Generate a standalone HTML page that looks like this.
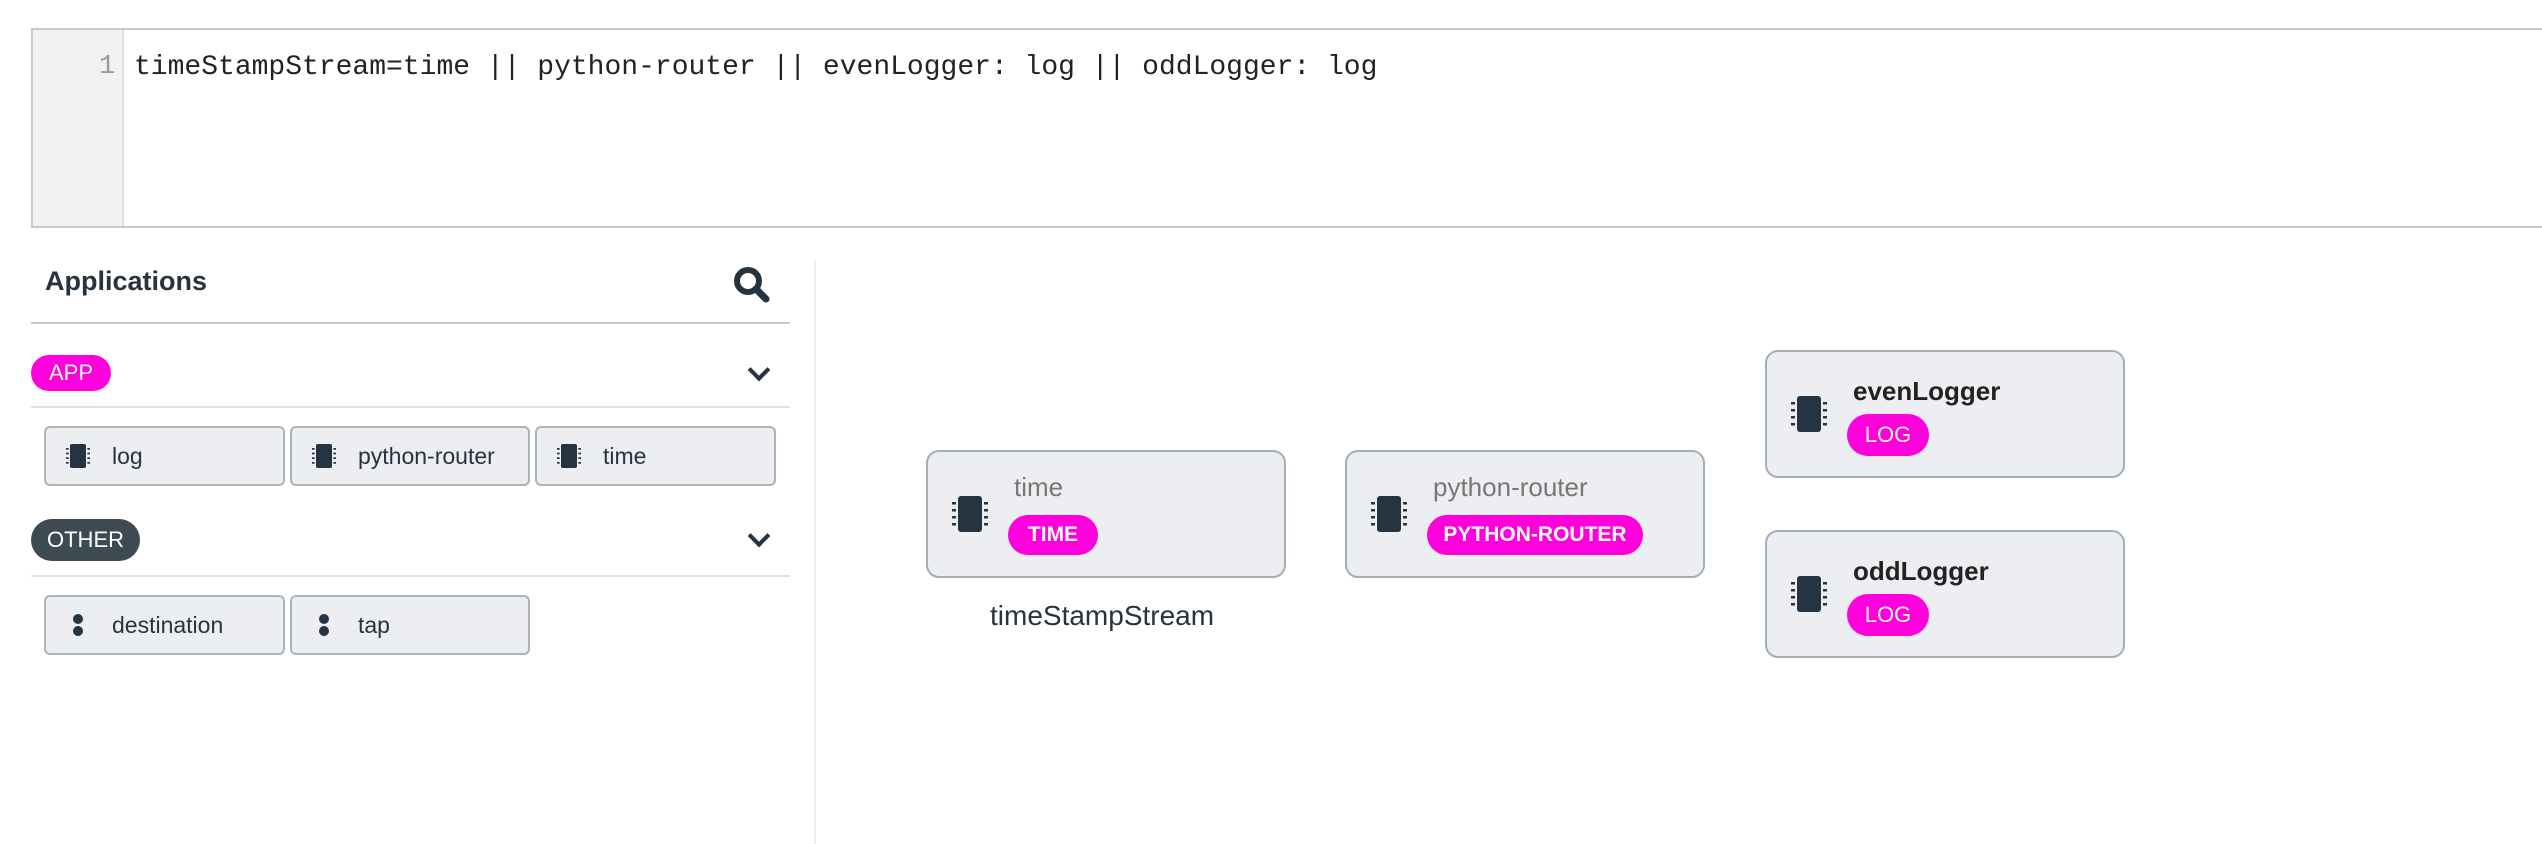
<!DOCTYPE html>
<html><head><meta charset="utf-8"><style>
*{box-sizing:border-box;margin:0;padding:0}
body{width:2542px;height:844px;background:#fff;position:relative;overflow:hidden;font-family:"Liberation Sans",sans-serif;color:#263340}
.abs{position:absolute}
.editor{left:31px;top:28px;width:2530px;height:200px;border:2px solid #c5cacf;border-right:none}
.gutter{left:0;top:0;width:91px;height:100%;background:#f0f1f3;border-right:2px solid #dde0e3}
.code{left:101px;top:22px;font-family:"Liberation Mono",monospace;font-size:28px;color:#222;white-space:pre}
.ln{left:66px;top:22px;font-family:"Liberation Mono",monospace;font-size:27px;color:#999}
.pill{position:absolute;border-radius:22px;color:#fff;font-size:22px;display:flex;align-items:center;justify-content:center}
.mag{background:#ff00dc}
.item{position:absolute;height:60px;background:#eceef1;border:2px solid #a9b4bc;border-radius:6px;font-size:23px;display:flex;align-items:center}
.item svg{margin-left:20px;margin-right:22px}
.node{position:absolute;width:360px;height:128px;background:#eceef1;border:2px solid #a3afb8;border-radius:13px}
.node svg{position:absolute;left:24px;top:44px}
.ttl{position:absolute;left:86px;top:20px;font-size:26px}
.hr{position:absolute;left:31px;width:759px;height:2px;background:#dfe2e5}
.chev{position:absolute;width:16px;height:16px;border-right:4px solid #263340;border-bottom:4px solid #263340;transform:rotate(45deg)}
</style></head><body>
<div class="abs editor"><div class="abs gutter"></div><div class="abs ln">1</div><div class="abs code">timeStampStream=time || python-router || evenLogger: log || oddLogger: log</div></div>

<div class="abs" style="left:45px;top:266px;font-size:27px;font-weight:bold">Applications</div>
<svg class="abs" style="left:733px;top:266px" width="38" height="38" viewBox="0 0 38 38"><circle cx="15" cy="15" r="11" fill="none" stroke="#263340" stroke-width="6"/><line x1="23" y1="23" x2="33" y2="33" stroke="#263340" stroke-width="7" stroke-linecap="round"/></svg>
<div class="hr" style="top:322px;background:#c5cacf"></div>
<div class="abs" style="left:814px;top:260px;width:2px;height:584px;background:#eceef0"></div>

<div class="pill mag" style="left:31px;top:355px;width:80px;height:36px">APP</div>
<div class="chev" style="left:751px;top:362px"></div>
<div class="hr" style="top:406px"></div>

<svg width="0" height="0" style="position:absolute"><defs><g id="chip"><rect x="6" y="0" width="24" height="36" rx="3" fill="#263340"/><g fill="#263340"><rect x="0" y="6" width="4" height="2.5"/><rect x="0" y="13" width="4" height="2.5"/><rect x="0" y="20" width="4" height="2.5"/><rect x="0" y="27" width="4" height="2.5"/><rect x="32" y="6" width="4" height="2.5"/><rect x="32" y="13" width="4" height="2.5"/><rect x="32" y="20" width="4" height="2.5"/><rect x="32" y="27" width="4" height="2.5"/></g></g></defs></svg>

<div class="item" style="left:44px;top:426px;width:241px"><svg width="24" height="26" viewBox="0 0 36 36"><use href="#chip"/></svg>log</div>
<div class="item" style="left:290px;top:426px;width:240px"><svg width="24" height="26" viewBox="0 0 36 36"><use href="#chip"/></svg>python-router</div>
<div class="item" style="left:535px;top:426px;width:241px"><svg width="24" height="26" viewBox="0 0 36 36"><use href="#chip"/></svg>time</div>

<div class="pill" style="left:31px;top:519px;width:109px;height:42px;background:#3d4a52">OTHER</div>
<div class="chev" style="left:751px;top:528px"></div>
<div class="hr" style="top:575px"></div>

<div class="item" style="left:44px;top:595px;width:241px"><svg width="24" height="26" viewBox="0 0 24 26"><circle cx="12" cy="7" r="5" fill="#263340"/><circle cx="12" cy="19" r="5" fill="#263340"/></svg>destination</div>
<div class="item" style="left:290px;top:595px;width:240px"><svg width="24" height="26" viewBox="0 0 24 26"><circle cx="12" cy="7" r="5" fill="#263340"/><circle cx="12" cy="19" r="5" fill="#263340"/></svg>tap</div>

<div class="node" style="left:926px;top:450px"><svg width="36" height="36"><use href="#chip"/></svg><div class="ttl" style="color:#777">time</div><div class="pill mag" style="left:80px;top:63px;width:90px;height:40px;font-weight:bold;font-size:21px">TIME</div></div>
<div class="abs" style="left:990px;top:600px;font-size:28px">timeStampStream</div>

<div class="node" style="left:1345px;top:450px"><svg width="36" height="36"><use href="#chip"/></svg><div class="ttl" style="color:#777">python-router</div><div class="pill mag" style="left:80px;top:63px;width:216px;height:40px;font-weight:bold;font-size:21px">PYTHON-ROUTER</div></div>

<div class="node" style="left:1765px;top:350px"><svg width="36" height="36"><use href="#chip"/></svg><div class="ttl" style="font-weight:bold;color:#222;top:24px">evenLogger</div><div class="pill mag" style="left:80px;top:62px;width:82px;height:42px;font-size:22px">LOG</div></div>
<div class="node" style="left:1765px;top:530px"><svg width="36" height="36"><use href="#chip"/></svg><div class="ttl" style="font-weight:bold;color:#222;top:24px">oddLogger</div><div class="pill mag" style="left:80px;top:62px;width:82px;height:42px;font-size:22px">LOG</div></div>
</body></html>
